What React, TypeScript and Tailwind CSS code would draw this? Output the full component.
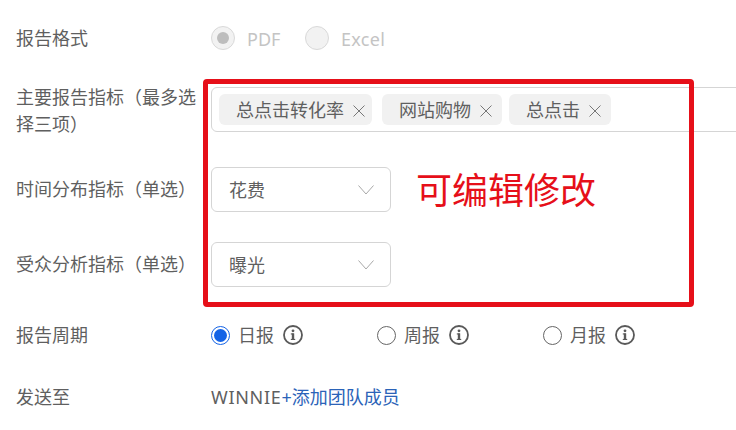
const FONT = "font-['Noto_Sans','Noto_Sans_CJK_SC',sans-serif]";

function InfoIcon() {
    return (
        <svg width="20" height="20" viewBox="0 0 20 20" className="shrink-0">
            <circle cx="10" cy="10" r="9" fill="none" stroke="#595959" strokeWidth="1.8" />
            <circle cx="10" cy="5.8" r="1.4" fill="#595959" />
            <rect x="8.8" y="8.4" width="2.4" height="6.4" fill="#595959" />
            <rect x="7.8" y="8.4" width="3" height="1.1" fill="#595959" />
            <rect x="7.8" y="13.9" width="4.4" height="1.1" fill="#595959" />
        </svg>
    );
}

function Tag({ text, className }: { text: string; className: string }) {
    return (
        <div className={`flex h-[31px] items-center rounded-md bg-[#f1f1f1] pl-[17px] ${className}`}>
            <span className="pt-[1px]">{text}</span>
            <svg width="12" height="12" viewBox="0 0 12 12" className="ml-[9px] mt-[3px] shrink-0">
                <path d="M0.5 0.5L11.5 11.5M11.5 0.5L0.5 11.5" fill="none" stroke="#777777" strokeWidth="1" />
            </svg>
        </div>
    );
}

function Select({ value }: { value: string }) {
    return (
        <div className="flex h-[45px] w-[180px] items-center justify-between rounded-md border border-[#d5d5d5] pl-[17px] pr-[16px]">
            <span className="pt-[1px]">{value}</span>
            <svg width="16" height="10" viewBox="0 0 16 10" className="shrink-0">
                <path d="M0.5 0.5L8 9L15.5 0.5" fill="none" stroke="#a8a8a8" strokeWidth="1" />
            </svg>
        </div>
    );
}

function Period({ label, checked, className }: { label: string; checked?: boolean; className: string }) {
    return (
        <div className={`flex items-center ${className}`}>
            {checked ? (
                <span className="flex h-[19px] w-[19px] items-center justify-center rounded-full border border-[#1463e6]">
                    <span className="h-[13px] w-[13px] rounded-full bg-[#1463e6]" />
                </span>
            ) : (
                <span className="h-[19px] w-[19px] rounded-full border border-[#666666]" />
            )}
            <span className="ml-[8px] mr-[9px]">{label}</span>
            <InfoIcon />
        </div>
    );
}

export default function App() {
    return (
        <div className={`relative h-[430px] w-[736px] overflow-hidden bg-white pt-[18px] text-[18px] leading-[27px] text-[#5f5f5f] ${FONT}`}>
            <div className="flex h-[40px] items-center pl-4">
                <div className="w-[195px] shrink-0">报告格式</div>
                <span className="flex h-6 w-6 items-center justify-center rounded-full border border-[#d9d9d9] bg-[#f2f2f2]">
                    <span className="h-[12px] w-[12px] rounded-full bg-[#bdbdbd]" />
                </span>
                <span className="ml-3 w-[58px] pt-[2px] text-[#c4c4c4]">PDF</span>
                <span className="h-6 w-6 rounded-full border border-[#d9d9d9] bg-[#f2f2f2]" />
                <span className="ml-3 pt-[2px] tracking-[0.3px] text-[#c4c4c4]">Excel</span>
            </div>

            <div className="mt-[29px] flex h-[45px] items-center pl-4">
                <div className="w-[195px] shrink-0 pt-[3px] pr-[10px]">主要报告指标（最多选择三项）</div>
                <div className="flex h-[45px] w-[560px] shrink-0 items-center gap-[10px] rounded-md border border-[#d5d5d5] pl-[7px]">
                    <Tag text="总点击转化率" className="w-[153px]" />
                    <Tag text="网站购物" className="w-[120px]" />
                    <Tag text="总点击" className="-ml-[3px] w-[102px]" />
                </div>
            </div>

            <div className="mt-[35px] flex h-[45px] items-center pl-4">
                <div className="w-[195px] shrink-0">时间分布指标（单选）</div>
                <Select value="花费" />
                <div className="ml-[25px] mt-[2px] text-[36px] leading-[45px] text-[#e60f19]">可编辑修改</div>
            </div>

            <div className="mt-[30px] flex h-[45px] items-center pl-4">
                <div className="w-[195px] shrink-0">受众分析指标（单选）</div>
                <Select value="曝光" />
            </div>

            <div className="mt-[36px] flex h-[24px] items-center pl-4">
                <div className="w-[195px] shrink-0">报告周期</div>
                <Period label="日报" checked className="w-[166px]" />
                <Period label="周报" className="w-[166px]" />
                <Period label="月报" className="w-[166px]" />
            </div>

            <div className="mt-[38px] flex h-[24px] items-center pl-4">
                <div className="w-[195px] shrink-0">发送至</div>
                <span className="tracking-[0.7px]">WINNIE</span>
                <span className="text-[#2b63b8]">+添加团队成员</span>
            </div>

            <div className="absolute left-[203px] top-[79px] h-[228px] w-[491px] rounded-[4px] border-[5px] border-[#e60f19]" />
        </div>
    );
}
